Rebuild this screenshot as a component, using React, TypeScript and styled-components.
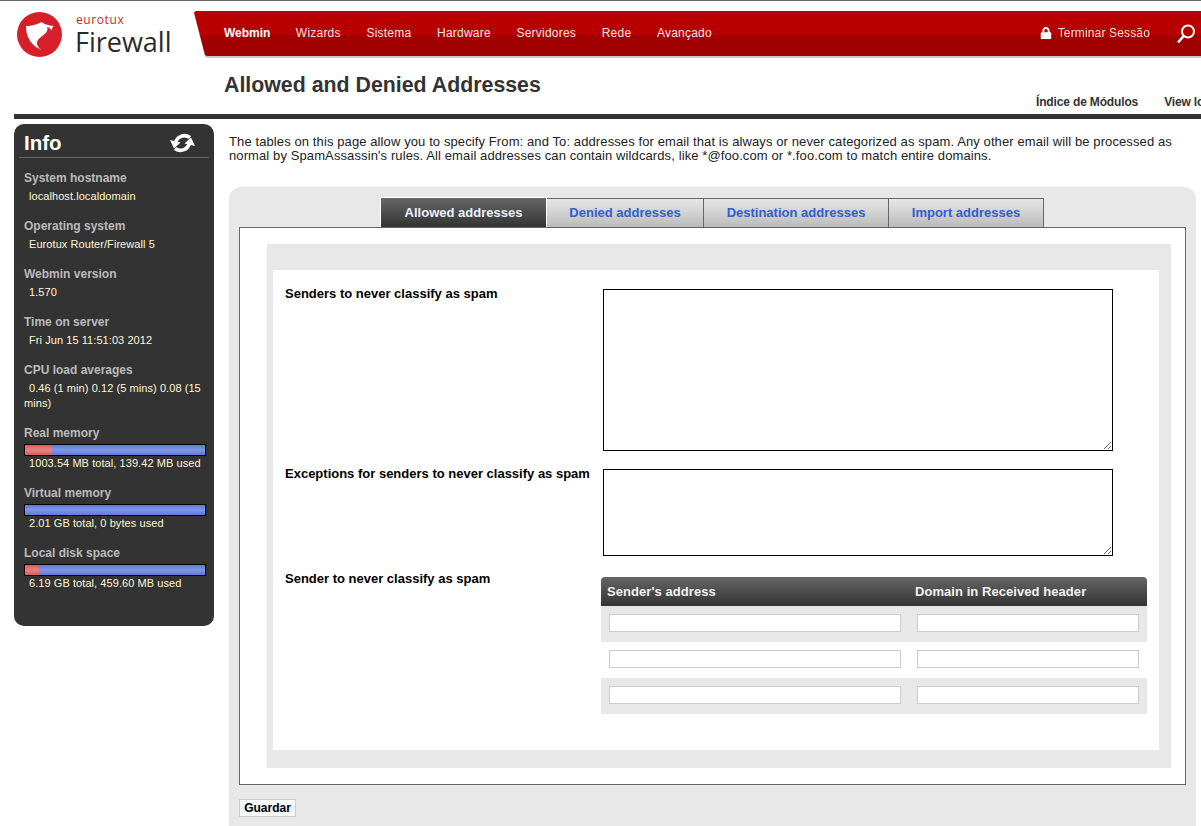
import React from 'react';
import styled, { createGlobalStyle } from 'styled-components';
import { FaLock } from 'react-icons/fa';

const GlobalStyle = createGlobalStyle`
  html, body {
    margin: 0;
    padding: 0;
    height: 826px;
    overflow: hidden;
    background: #fff;
    font-family: "Liberation Sans", Arial, sans-serif;
  }
`;

const Page = styled.div`
  width: 1201px;
  height: 826px;
  overflow: hidden;
  border-top: 1px solid #666;
  box-sizing: border-box;
`;

const Header = styled.header`
  display: flex;
  height: 113px;
  padding-left: 17px;
`;

const LogoBox = styled.div`
  display: flex;
  width: 177px;
  gap: 13px;
  padding-top: 11px;
  box-sizing: border-box;
  flex-shrink: 0;
`;

const LogoWords = styled.div`
  display: flex;
  flex-direction: column;
  font-family: "Open Sans", sans-serif;
  margin-top: 1px;
`;

const LogoSmall = styled.span`
  color: #d31f27;
  font-size: 12px;
  line-height: 14px;
  letter-spacing: 0.6px;
  margin-left: 1px;
`;

const LogoBig = styled.span`
  color: #2b2b2b;
  font-size: 27px;
  line-height: 29px;
  white-space: nowrap;
`;

const HeaderMain = styled.div`
  flex: 1;
  min-width: 0;
  display: flex;
  flex-direction: column;
  padding-top: 10px;
`;

const NavShadow = styled.div`
  filter: drop-shadow(0 2px 0 #c8c8c8);
`;

const NavBar = styled.nav`
  height: 45px;
  display: flex;
  align-items: center;
  padding-left: 30px;
  padding-bottom: 2px;
  box-sizing: border-box;
  background: linear-gradient(#b80000 0, #b80000 24px, #a00000 24px, #a00000 100%);
  clip-path: polygon(2px 0, 100% 0, 100% 100%, 13px 100%, 11px 98%, 0 3%);
  font-size: 12px;
  color: #f4e4e4;
`;

const NavLink = styled.span<{ $active?: boolean }>`
  margin-right: ${(p) => (p.$active ? '25.4px' : '25.7px')};
  font-weight: ${(p) => (p.$active ? 'bold' : 'normal')};
  letter-spacing: ${(p) => (p.$active ? '0' : '0.22px')};
  color: ${(p) => (p.$active ? '#fff' : '#f4e4e4')};
`;

const NavRight = styled.div`
  margin-left: auto;
  display: flex;
  align-items: center;
  gap: 6px;
  padding-right: 5px;
  letter-spacing: 0.15px;
`;

const SearchIcon = styled.svg`
  margin: 3px 0 0 20px;
  display: block;
`;

const TitleRow = styled.div`
  display: flex;
  flex-direction: column;
  padding-left: 30px;
`;

const Title = styled.h1`
  margin: 16px 0 0;
  font-size: 21.33px;
  line-height: 26px;
  color: #333;
  font-weight: bold;
`;

const SubLinks = styled.div`
  display: flex;
  gap: 26px;
  padding-left: 812px;
  font-size: 12px;
  font-weight: bold;
  letter-spacing: -0.15px;
  color: #333;
  white-space: nowrap;
  margin-top: -3px;
`;

const Divider = styled.div`
  height: 5px;
  background: #333;
  margin-left: 14px;
`;

const Body = styled.div`
  display: flex;
  align-items: flex-start;
  padding: 5px 0 0 14px;
`;

const Sidebar = styled.aside`
  width: 200px;
  height: 502px;
  flex-shrink: 0;
  background: #333;
  border-radius: 10px;
  padding: 6px 5px 0;
  box-sizing: border-box;
  color: #fff;
`;

const SideHead = styled.div`
  display: flex;
  justify-content: space-between;
  align-items: center;
  height: 26px;
  padding: 0 14px 1px 5px;
  border-bottom: 1px solid #666;
  font-size: 20.5px;
  font-weight: bold;
`;

const SideList = styled.div`
  padding: 13px 0 0 5px;
  font-size: 11px;
`;

const SideItem = styled.div`
  margin-bottom: 15px;
`;

const SideLabel = styled.div`
  font-size: 12px;
  font-weight: bold;
  color: #bbb;
  line-height: 14px;
  margin-bottom: 4px;
`;

const SideValue = styled.div`
  color: #fff7d6;
  line-height: 15px;
  letter-spacing: 0.07px;
  text-indent: 5px;
`;

const Meter = styled.div`
  height: 12px;
  width: 182px;
  box-sizing: border-box;
  border: 1px solid #000;
  display: flex;
  background: linear-gradient(#5f7bd8, #7e96e8 50%, #5f7bd8);
`;

const MeterUsed = styled.div`
  background: linear-gradient(#d85c5c, #ec8080 50%, #d85c5c);
`;

const Content = styled.main`
  flex: 1;
  min-width: 0;
  padding: 0 5px 0 15px;
`;

const Intro = styled.p`
  margin: 11px 0 24px;
  font-size: 13px;
  line-height: 14px;
  letter-spacing: 0.105px;
  color: #222;
  width: 960px;
`;

const Panel = styled.section`
  background: #e8e8e8;
  border-radius: 12px 12px 0 0;
  padding: 10px 10px 40px;
`;

const Tabs = styled.div`
  display: flex;
  height: 30px;
  padding-left: 141px;
`;

const Tab = styled.div<{ $active?: boolean }>`
  display: flex;
  align-items: center;
  justify-content: center;
  box-sizing: border-box;
  height: ${(p) => (p.$active ? '30px' : '29px')};
  margin-top: ${(p) => (p.$active ? '0' : '1px')};
  padding: ${(p) => (p.$active ? '0' : '0 0 2px 0')};
  font-size: 13px;
  font-weight: bold;
  border: 1px solid ${(p) => (p.$active ? '#fff' : '#666')};
  border-bottom: 0;
  border-left-width: ${(p) => (p.$active ? '1px' : '0')};
  color: ${(p) => (p.$active ? '#eaf1ff' : '#3060c8')};
  background: ${(p) =>
    p.$active ? 'linear-gradient(#666, #333)' : 'linear-gradient(#e6e6e6, #bbb)'};
`;

const TabBody = styled.div`
  background: #fff;
  border: 1px solid #666;
  height: 558px;
  box-sizing: border-box;
  padding: 16px 14px 16px 27px;
`;

const OuterForm = styled.div`
  background: #e8e8e8;
  height: 524px;
  padding: 26px 12px 18px 6px;
  box-sizing: border-box;
`;

const InnerForm = styled.div`
  background: #fff;
  height: 480px;
  padding: 19px 12px 0 12px;
  box-sizing: border-box;
`;

const FormRow = styled.div`
  display: grid;
  grid-template-columns: 318px 1fr;
  margin-bottom: 18px;
`;

const FieldLabel = styled.label`
  font-size: 13px;
  font-weight: bold;
  color: #000;
  line-height: 15px;
  margin-top: -3px;
  white-space: nowrap;
`;

const BigArea = styled.textarea<{ $h: number }>`
  display: block;
  width: 510px;
  height: ${(p) => p.$h}px;
  box-sizing: border-box;
  border: 1px solid #000;
  background: #fff;
  margin: 0;
  padding: 2px;
`;

const Table = styled.div`
  margin: 3px 0 0 -2px;
  width: 546px;
`;

const TableHead = styled.div`
  display: grid;
  grid-template-columns: 308px 1fr;
  height: 29px;
  align-items: center;
  padding: 0 0 0 6px;
  border-radius: 4px 4px 0 0;
  background: linear-gradient(#666, #333);
  color: #f2f2f2;
  font-size: 13px;
  font-weight: bold;
  letter-spacing: 0.06px;
`;

const TableRow = styled.div<{ $shade?: boolean }>`
  display: grid;
  grid-template-columns: 292px 222px;
  column-gap: 16px;
  height: 36px;
  align-items: start;
  padding: 8px 0 0 8px;
  box-sizing: border-box;
  background: ${(p) => (p.$shade ? '#e8e8e8' : '#fff')};
`;

const TextInput = styled.input`
  display: block;
  box-sizing: border-box;
  width: 100%;
  height: 18px;
  border: 1px solid #ccc;
  background: #fff;
  margin: 0;
  padding: 0;
`;

const SaveButton = styled.button`
  display: block;
  margin-top: 14px;
  width: 57px;
  height: 18px;
  box-sizing: border-box;
  border: 1px solid #ccc;
  padding: 0;
  background: linear-gradient(#fff, #e6f0f8 50%, #fff);
  color: #000;
  font: bold 12px "Liberation Sans", Arial, sans-serif;
`;

const Logo = () => (
  <svg width="45" height="45" viewBox="0 0 45 45">
    <circle cx="22.5" cy="22.5" r="22.5" fill="#d61f28" />
    <path
      d="M9 14 C15 14 21 12 24.5 10 C27 12 31 13.5 37 14 C35.5 15 35 16 34.5 18.5 C33.5 16.5 32 15.5 30 15 C31.5 18.5 29 21 26.5 23 C23 25.5 19.5 28 20 32 C20.5 35 23 37 25 38 C16 35 8.5 26 9 14 Z"
      fill="#fff"
    />
  </svg>
);

const RefreshIcon = () => (
  <svg width="25" height="20" viewBox="0 0 25 20">
    <g>
      <path d="M5.5 10 C7 3.5 14 0.5 20 4.5" fill="none" stroke="#fff" strokeWidth="3.6" />
      <path d="M0 7 L10.5 9.5 L4 15.5 Z" fill="#fff" />
    </g>
    <g transform="rotate(180 12.5 10)">
      <path d="M5.5 10 C7 3.5 14 0.5 20 4.5" fill="none" stroke="#fff" strokeWidth="3.6" />
      <path d="M0 7 L10.5 9.5 L4 15.5 Z" fill="#fff" />
    </g>
  </svg>
);

const tabs = [
  { label: 'Allowed addresses', width: 167, active: true },
  { label: 'Denied addresses', width: 157 },
  { label: 'Destination addresses', width: 185 },
  { label: 'Import addresses', width: 155 },
];

const nav = ['Webmin', 'Wizards', 'Sistema', 'Hardware', 'Servidores', 'Rede', 'Avançado'];

const info = [
  { label: 'System hostname', value: 'localhost.localdomain' },
  { label: 'Operating system', value: 'Eurotux Router/Firewall 5' },
  { label: 'Webmin version', value: '1.570' },
  { label: 'Time on server', value: 'Fri Jun 15 11:51:03 2012' },
  { label: 'CPU load averages', value: '0.46 (1 min) 0.12 (5 mins) 0.08 (15 mins)' },
  { label: 'Real memory', value: '1003.54 MB total, 139.42 MB used', used: 15 },
  { label: 'Virtual memory', value: '2.01 GB total, 0 bytes used', used: 0.5 },
  { label: 'Local disk space', value: '6.19 GB total, 459.60 MB used', used: 8 },
];

export default function App() {
  return (
    <Page>
      <GlobalStyle />
      <Header>
        <LogoBox>
          <Logo />
          <LogoWords>
            <LogoSmall>eurotux</LogoSmall>
            <LogoBig>Firewall</LogoBig>
          </LogoWords>
        </LogoBox>
        <HeaderMain>
          <NavShadow>
            <NavBar>
              {nav.map((item, i) => (
                <NavLink key={item} $active={i === 0}>
                  {item}
                </NavLink>
              ))}
              <NavRight>
                <FaLock size={12} color="#fff" />
                <span>Terminar Sessão</span>
                <SearchIcon width="20" height="20" viewBox="0 0 20 20">
                  <circle cx="12" cy="7.5" r="6" fill="none" stroke="#fff" strokeWidth="2" />
                  <path d="M7.8 11.8 L2 18.5" stroke="#fff" strokeWidth="2.6" />
                </SearchIcon>
              </NavRight>
            </NavBar>
          </NavShadow>
          <TitleRow>
            <Title>Allowed and Denied Addresses</Title>
            <SubLinks>
              <span>Índice de Módulos</span>
              <span>View logs</span>
            </SubLinks>
          </TitleRow>
        </HeaderMain>
      </Header>
      <Divider />
      <Body>
        <Sidebar>
          <SideHead>
            Info
            <RefreshIcon />
          </SideHead>
          <SideList>
            {info.map((item) => (
              <SideItem key={item.label}>
                <SideLabel>{item.label}</SideLabel>
                {item.used !== undefined && (
                  <Meter>
                    <MeterUsed style={{ width: `${item.used}%` }} />
                  </Meter>
                )}
                <SideValue>{item.value}</SideValue>
              </SideItem>
            ))}
          </SideList>
        </Sidebar>
        <Content>
          <Intro>
            The tables on this page allow you to specify From: and To: addresses for email that is
            always or never categorized as spam. Any other email will be processed as normal by
            SpamAssassin's rules. All email addresses can contain wildcards, like *@foo.com or
            *.foo.com to match entire domains.
          </Intro>
          <Panel>
            <Tabs>
              {tabs.map((t) => (
                <Tab key={t.label} $active={t.active} style={{ width: t.width }}>
                  {t.label}
                </Tab>
              ))}
            </Tabs>
            <TabBody>
              <OuterForm>
                <InnerForm>
                  <FormRow>
                    <FieldLabel>Senders to never classify as spam</FieldLabel>
                    <BigArea $h={162} />
                  </FormRow>
                  <FormRow>
                    <FieldLabel>Exceptions for senders to never classify as spam</FieldLabel>
                    <BigArea $h={87} />
                  </FormRow>
                  <FormRow>
                    <FieldLabel>Sender to never classify as spam</FieldLabel>
                    <Table>
                      <TableHead>
                        <span>Sender's address</span>
                        <span>Domain in Received header</span>
                      </TableHead>
                      {[true, false, true].map((shade, i) => (
                        <TableRow key={i} $shade={shade}>
                          <TextInput />
                          <TextInput />
                        </TableRow>
                      ))}
                    </Table>
                  </FormRow>
                </InnerForm>
              </OuterForm>
            </TabBody>
            <SaveButton>Guardar</SaveButton>
          </Panel>
        </Content>
      </Body>
    </Page>
  );
}
